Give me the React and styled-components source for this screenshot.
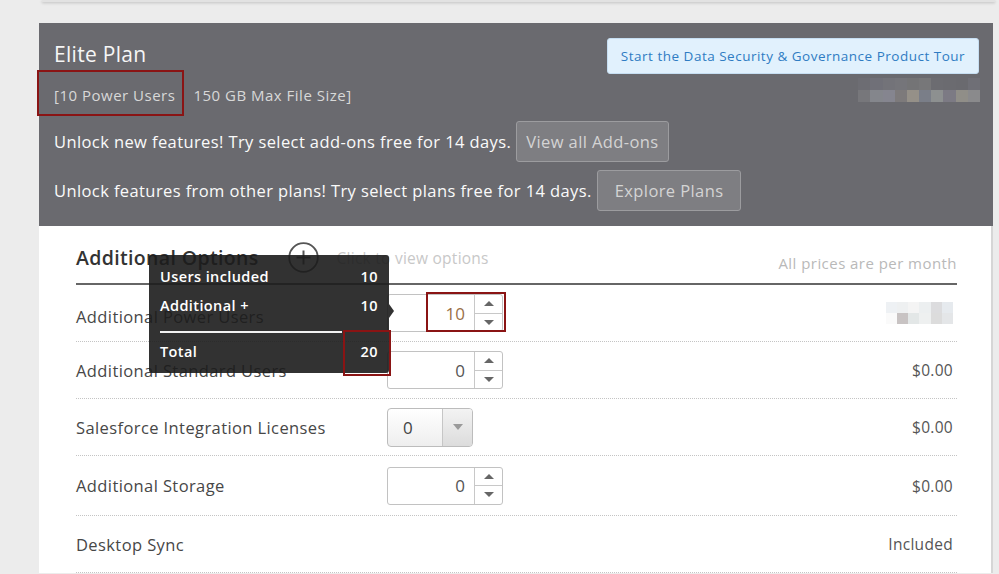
import React from 'react';
import styled, { createGlobalStyle } from 'styled-components';

const GlobalStyle = createGlobalStyle`
  html, body { margin: 0; padding: 0; background: #ececec; }
  body { font-family: "Open Sans", "Liberation Sans", sans-serif; }
  * { box-sizing: border-box; }
`;

const Page = styled.div`
  width: 999px;
  height: 574px;
  overflow: hidden;
  background: #ececec;
`;

const PrevCard = styled.div`
  height: 2px;
  margin: 0 4px 0 42px;
  background: #e2e2e2;
  box-shadow: 0 1px 3px rgba(0, 0, 0, 0.22);
`;

const Card = styled.div`
  margin: 21px 0 0 39px;
  width: 954px;
`;

const Header = styled.div`
  background: #6a6a6f;
  padding: 15px 14px 15px 15px;
  color: #fff;
`;

const TopRow = styled.div`
  display: flex;
  justify-content: space-between;
  align-items: flex-start;
`;

const TitleBlock = styled.div`
  padding-top: 2px;
`;

const Title = styled.h2`
  margin: 0;
  font-size: 21px;
  letter-spacing: 0.3px;
  line-height: 28px;
  font-weight: 400;
  color: #f6f6f6;
`;

const Specs = styled.div`
  margin-top: 17px;
  font-size: 15px;
  letter-spacing: 0.5px;
  line-height: 20px;
  color: #d8d8d8;
  display: flex;
`;

const Marked = styled.span`
  position: relative;
  &::after {
    content: '';
    position: absolute;
    inset: ${(p) => p.$inset};
    border: 2px solid #8a1414;
    pointer-events: none;
  }
`;

const SpecItem = styled.span`
  margin-left: 18px;
`;

const RightBlock = styled.div`
  display: flex;
  flex-direction: column;
  align-items: flex-end;
`;

const TourButton = styled.button`
  width: 372px;
  height: 36px;
  border: 1px solid #c6def2;
  border-radius: 3px;
  background: #e1f1fd;
  color: #2f7cc3;
  font-family: inherit;
  font-size: 13.5px;
  letter-spacing: 0.5px;
  padding: 0;
  cursor: pointer;
`;

const Pixelated = styled.div`
  display: grid;
  grid-template-columns: repeat(${(p) => p.$cols}, ${(p) => p.$size}px);
  grid-auto-rows: ${(p) => p.$size}px;
  margin-top: ${(p) => p.$top || 0}px;
  margin-right: ${(p) => p.$right || 0}px;
`;

const Pixel = styled.span`
  display: block;
`;

const AddonRow = styled.div`
  display: flex;
  align-items: center;
  margin-top: ${(p) => p.$top}px;
  font-size: 16.5px;
  letter-spacing: 0.4px;
  color: #fafafa;
`;

const GhostButton = styled.button`
  height: 41px;
  margin-left: 5px;
  padding: 0 ${(p) => p.$pad}px;
  background: #7e7e82;
  border: 1px solid #9c9c9f;
  border-radius: 3px;
  color: #d4d4d4;
  font-family: inherit;
  font-size: 16.5px;
  letter-spacing: 0.4px;
  cursor: pointer;
`;

const Content = styled.div`
  position: relative;
  background: #fff;
  border-right: 2px solid #d6d6d6;
  padding: 0 34px 0 37px;
`;

const HeadingRow = styled.div`
  display: flex;
  justify-content: space-between;
  padding: 16px 0 10px;
  border-bottom: 2px solid #666;
`;

const HeadingGroup = styled.div`
  display: flex;
  align-items: center;
  height: 31px;
`;

const Heading = styled.h3`
  margin: 0;
  font-size: 19.5px;
  letter-spacing: 0.35px;
  line-height: 26px;
  font-weight: 600;
  color: #333;
`;

const PlusButton = styled.span`
  display: inline-flex;
  margin-left: 29px;
  color: #555;
`;

const Hint = styled.span`
  margin-left: 18px;
  font-size: 15.5px;
  letter-spacing: 0.25px;
  color: #c8c8c8;
`;

const PriceNote = styled.span`
  align-self: flex-end;
  font-size: 15px;
  letter-spacing: 0.45px;
  line-height: 20px;
  color: #b9b9b9;
`;

const Row = styled.div`
  display: grid;
  grid-template-columns: 311px 1fr auto;
  align-items: center;
  height: ${(p) => (p.$tall ? 60 : 57)}px;
  border-bottom: 1px dotted #c4c4c4;
`;

const Label = styled.span`
  font-size: 16.5px;
  letter-spacing: 0.4px;
  color: #474747;
  padding-top: ${(p) => p.$shift || 0}px;
`;

const Price = styled.span`
  padding-right: 4px;
  font-size: 15.5px;
  letter-spacing: 0.3px;
  color: #555;
  display: flex;
  justify-content: flex-end;
`;

const NumberBox = styled.div`
  position: relative;
  display: flex;
  width: 116px;
  height: 38px;
  border: 1px solid #c2c2c2;
  border-radius: 3px;
  background: #fff;
`;

const Field = styled.span`
  flex: 1;
  display: flex;
  align-items: center;
  justify-content: flex-end;
  padding-right: 9px;
  font-size: 17px;
  color: ${(p) => p.$color || '#555'};
`;

const Spinner = styled.span`
  width: 28px;
  display: flex;
  flex-direction: column;
  border-left: 1px solid #c8c8c8;
`;

const SpinHalf = styled.span`
  flex: 1;
  display: flex;
  align-items: center;
  justify-content: center;
  & + & {
    border-top: 1px solid #c8c8c8;
  }
`;

const Tri = styled.span`
  width: 0;
  height: 0;
  border-left: 5px solid transparent;
  border-right: 5px solid transparent;
  ${(p) =>
    p.$down
      ? 'border-top: 5px solid #666;'
      : 'border-bottom: 5px solid #666;'}
`;

const SelectBox = styled.div`
  display: flex;
  width: 86px;
  height: 39px;
  border: 1px solid #bcbcbc;
  border-radius: 4px;
  background: linear-gradient(#fff, #eeeeee);
  overflow: hidden;
`;

const SelectValue = styled.span`
  flex: 1;
  display: flex;
  align-items: center;
  padding-left: 15px;
  font-size: 17px;
  color: #444;
`;

const SelectArrow = styled.span`
  width: 30px;
  display: flex;
  align-items: center;
  justify-content: center;
  border-left: 1px solid #c6c6c6;
  background: linear-gradient(#f3f3f3, #dcdcdc);
`;

const GrayTri = styled.span`
  width: 0;
  height: 0;
  border-left: 5px solid transparent;
  border-right: 5px solid transparent;
  border-top: 6px solid #9a9a9a;
`;

const Tooltip = styled.div`
  position: absolute;
  left: 110px;
  top: 29px;
  width: 240px;
  padding: 12px 11px 11px;
  background: rgba(28, 28, 28, 0.9);
  border-radius: 3px;
  color: #fff;
  font-size: 14.5px;
  letter-spacing: 0.4px;
  font-weight: 600;
  &::after {
    content: '';
    position: absolute;
    right: -5px;
    top: 49px;
    border-left: 5px solid rgba(28, 28, 28, 0.9);
    border-top: 7px solid transparent;
    border-bottom: 7px solid transparent;
  }
`;

const TipRow = styled.div`
  display: flex;
  justify-content: space-between;
  line-height: 20px;
  margin-top: ${(p) => p.$top || 0}px;
`;

const TipRule = styled.div`
  height: 2px;
  margin: 15px 36px 0 0;
  background: #f2f2f2;
`;

const RedFrame = styled.span`
  position: absolute;
  left: 38px;
  right: -4px;
  top: -3px;
  bottom: -1px;
  border: 2px solid #8a1414;
`;

const headerBlur = [
  ['#6d6d73', '#707078', '#737379', '#75757a', '#747476', '#777779', '#6c6c71', '#6b6b70', '#6a6a6f', '#6f6f76'],
  ['#77777b', '#84868c', '#85858f', '#7d7a7b', '#959088', '#7a7e88', '#8d9090', '#7c7a84', '#908e88', '#8a8a8c'],
];

const priceBlur = [
  ['#eef1f4', '#eef0f1', '#f4f4f4', '#eceff0', '#dcdcde', '#e6eaee'],
  ['#fafafa', '#c8c3c3', '#e3e7e7', '#eef0f0', '#dcdcdc', '#e4e6e8'],
];

function Blur({ grid, size, ...rest }) {
  return (
    <Pixelated $cols={grid[0].length} $size={size} {...rest}>
      {grid.flat().map((c, i) => (
        <Pixel key={i} style={{ background: c }} />
      ))}
    </Pixelated>
  );
}

function NumberInput({ value, color, children }) {
  return (
    <NumberBox>
      <Field $color={color}>{value}</Field>
      <Spinner>
        <SpinHalf>
          <Tri />
        </SpinHalf>
        <SpinHalf>
          <Tri $down />
        </SpinHalf>
      </Spinner>
      {children}
    </NumberBox>
  );
}

export default function App() {
  return (
    <Page>
      <GlobalStyle />
      <PrevCard />
      <Card>
        <Header>
          <TopRow>
            <TitleBlock>
              <Title>Elite Plan</Title>
              <Specs>
                <Marked $inset="-15px -9px -11px -17px">[10 Power Users</Marked>
                <SpecItem>150 GB Max File Size]</SpecItem>
              </Specs>
            </TitleBlock>
            <RightBlock>
              <TourButton>Start the Data Security &amp; Governance Product Tour</TourButton>
              <Blur grid={headerBlur} size={12.2} $top={4} $right={-1} />
            </RightBlock>
          </TopRow>
          <AddonRow $top={16}>
            Unlock new features! Try select add-ons free for 14 days.
            <GhostButton $pad={9}>View all Add-ons</GhostButton>
          </AddonRow>
          <AddonRow $top={8}>
            Unlock features from other plans! Try select plans free for 14 days.
            <GhostButton $pad={17}>Explore Plans</GhostButton>
          </AddonRow>
        </Header>
        <Content>
          <HeadingRow>
            <HeadingGroup>
              <Heading>Additional Options</Heading>
              <PlusButton>
                <svg width="31" height="31" viewBox="0 0 31 31" fill="none" stroke="currentColor">
                  <circle cx="15.5" cy="15.5" r="14.3" strokeWidth="1.8" />
                  <path d="M15.5 8.5v14M8.5 15.5h14" strokeWidth="2" />
                </svg>
              </PlusButton>
              <Hint>Click to view options</Hint>
            </HeadingGroup>
            <PriceNote>All prices are per month</PriceNote>
          </HeadingRow>

          <Row>
            <Label $shift={6}>Additional Power Users</Label>
            <NumberInput value="10" color="#9a7048">
              <RedFrame />
            </NumberInput>
            <Price>
              <Blur grid={priceBlur} size={11.2} />
            </Price>
          </Row>
          <Row>
            <Label>Additional Standard Users</Label>
            <NumberInput value="0" />
            <Price>$0.00</Price>
          </Row>
          <Row>
            <Label>Salesforce Integration Licenses</Label>
            <SelectBox>
              <SelectValue>0</SelectValue>
              <SelectArrow>
                <GrayTri />
              </SelectArrow>
            </SelectBox>
            <Price>$0.00</Price>
          </Row>
          <Row $tall>
            <Label>Additional Storage</Label>
            <NumberInput value="0" />
            <Price>$0.00</Price>
          </Row>
          <Row>
            <Label>Desktop Sync</Label>
            <span />
            <Price>Included</Price>
          </Row>

          <Tooltip>
            <TipRow>
              <span>Users included</span>
              <span>10</span>
            </TipRow>
            <TipRow $top={9}>
              <span>Additional +</span>
              <span>10</span>
            </TipRow>
            <TipRule />
            <TipRow $top={9}>
              <span>Total</span>
              <Marked $inset="-12px -13px -14px -18px">20</Marked>
            </TipRow>
          </Tooltip>
        </Content>
      </Card>
    </Page>
  );
}
